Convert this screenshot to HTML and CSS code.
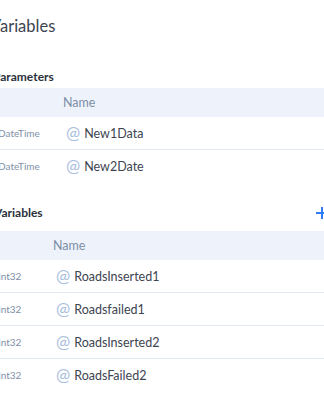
FILE: index.html
```html
<!DOCTYPE html>
<html>
<head>
<meta charset="utf-8">
<link rel="stylesheet" href="styles.css">
</head>
<body>
<div class="page">
  <h1 class="title">Variables</h1>

  <div class="section-head">
    <h2 class="section-title">Parameters</h2>
  </div>
  <div class="table table-params">
    <div class="row head"><div class="cell type"></div><div class="cell name-h">Name</div></div>
    <div class="row"><div class="cell type">DateTime</div><div class="cell name"><span class="at">@</span>New1Data</div></div>
    <div class="row last"><div class="cell type">DateTime</div><div class="cell name"><span class="at">@</span>New2Date</div></div>
  </div>

  <div class="section-head vars">
    <h2 class="section-title">Variables</h2>
    <button class="add" aria-label="Add variable">
      <svg width="12" height="12" viewBox="0 0 12 12"><rect x="0" y="5" width="12" height="2" fill="#2f7cf6"/><rect x="5" y="0" width="2" height="12" fill="#2f7cf6"/></svg>
    </button>
  </div>
  <div class="table table-vars">
    <div class="row head"><div class="cell type"></div><div class="cell name-h">Name</div></div>
    <div class="row"><div class="cell type">Int32</div><div class="cell name"><span class="at">@</span>RoadsInserted1</div></div>
    <div class="row"><div class="cell type">Int32</div><div class="cell name"><span class="at">@</span>Roadsfailed1</div></div>
    <div class="row"><div class="cell type">Int32</div><div class="cell name"><span class="at">@</span>RoadsInserted2</div></div>
    <div class="row last"><div class="cell type">Int32</div><div class="cell name"><span class="at">@</span>RoadsFailed2</div></div>
  </div>
</div>
</body>
</html>
```

FILE: styles.css
```css
html, body {
  margin: 0;
  padding: 0;
  background: #ffffff;
  overflow: hidden;
}
body {
  font-family: Lato, "Open Sans", sans-serif;
  color: #3d4451;
}
.page {
  margin-left: -9px;
  width: 345px;
  padding-top: 15px;
}
.title {
  margin: 0 0 0 -1px;
  font-size: 16.5px;
  font-weight: 400;
  line-height: 22px;
  color: #3d4451;
}
.section-head {
  display: flex;
  align-items: center;
  justify-content: space-between;
  margin-top: 32px;
  margin-bottom: 3px;
  height: 16px;
  padding-left: 2px;
}
.section-head.vars {
  margin-top: 17px;
  margin-bottom: 4px;
  height: 28px;
  padding-left: 3px;
}
.section-title {
  margin: 0;
  font-size: 12px;
  font-weight: 700;
  line-height: 16px;
  color: #2a313b;
}
.add {
  border: none;
  background: transparent;
  padding: 0;
  margin-right: 8px;
  width: 12px;
  height: 12px;
  display: flex;
}
.table {
  display: flex;
  flex-direction: column;
}
.row {
  display: grid;
  align-items: center;
  height: 32px;
  border-bottom: 1px solid #e1e8f2;
}
.row.last {
  border-bottom: none;
}
.row.head {
  height: 29px;
  background: #eef3fb;
  border-bottom: none;
}
.table-params .row {
  grid-template-columns: 72px 1fr;
}
.table-vars .row {
  grid-template-columns: 62px 1fr;
}
.cell.type {
  font-size: 10px;
  color: #8090a6;
  padding-left: 7px;
}
.cell.name-h {
  font-size: 12.5px;
  color: #7d8ea6;
}
.cell.name {
  font-size: 12.5px;
  color: #3d4451;
  padding-left: 3px;
  display: flex;
  align-items: center;
}
.at {
  font-size: 17px;
  line-height: 18px;
  color: #a9c0e0;
  margin-right: 4px;
}
```
